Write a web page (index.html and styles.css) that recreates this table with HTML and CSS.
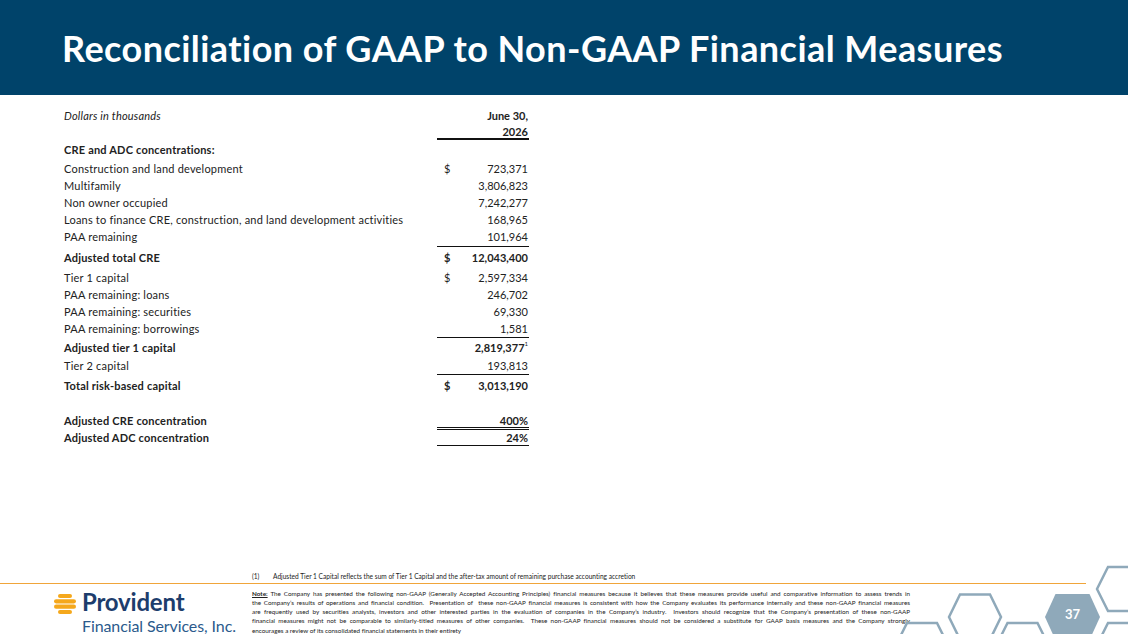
FILE: index.html
```html
<!DOCTYPE html>
<html lang="en">
<head>
<meta charset="utf-8">
<title>Reconciliation of GAAP to Non-GAAP Financial Measures</title>
<link rel="stylesheet" href="styles.css">
</head>
<body>
<div class="slide">
  <header class="hdr"><h1 class="title">Reconciliation of GAAP to Non-GAAP Financial Measures</h1></header>
  <main class="content">
    <div class="tbl">
      <div class="row h175"><span class="lbl it">Dollars in thousands</span><span class="amt"><span class="cur"></span><span class="val b">June 30,</span></span></div>
      <div class="row h15 bd2"><span class="lbl"></span><span class="amt"><span class="cur"></span><span class="val b">2026</span></span></div>
      <div class="row h20"><span class="lbl b">CRE and ADC concentrations:</span><span class="amt"></span></div>
      <div class="row"><span class="lbl">Construction and land development</span><span class="amt"><span class="cur">$</span><span class="val">723,371</span></span></div>
      <div class="row"><span class="lbl">Multifamily</span><span class="amt"><span class="cur"></span><span class="val">3,806,823</span></span></div>
      <div class="row"><span class="lbl">Non owner occupied</span><span class="amt"><span class="cur"></span><span class="val">7,242,277</span></span></div>
      <div class="row"><span class="lbl">Loans to finance CRE, construction, and land development activities</span><span class="amt"><span class="cur"></span><span class="val">168,965</span></span></div>
      <div class="row h19 bd1"><span class="lbl">PAA remaining</span><span class="amt"><span class="cur"></span><span class="val">101,964</span></span></div>
      <div class="row h22"><span class="lbl b">Adjusted total CRE</span><span class="amt"><span class="cur b">$</span><span class="val b">12,043,400</span></span></div>
      <div class="row"><span class="lbl">Tier 1 capital</span><span class="amt"><span class="cur">$</span><span class="val">2,597,334</span></span></div>
      <div class="row"><span class="lbl">PAA remaining: loans</span><span class="amt"><span class="cur"></span><span class="val">246,702</span></span></div>
      <div class="row"><span class="lbl">PAA remaining: securities</span><span class="amt"><span class="cur"></span><span class="val">69,330</span></span></div>
      <div class="row h18 bd1"><span class="lbl">PAA remaining: borrowings</span><span class="amt"><span class="cur"></span><span class="val">1,581</span></span></div>
      <div class="row h20"><span class="lbl b">Adjusted tier 1 capital</span><span class="amt"><span class="cur"></span><span class="val b">2,819,377<sup class="sup">1</sup></span></span></div>
      <div class="row bd1"><span class="lbl">Tier 2 capital</span><span class="amt"><span class="cur"></span><span class="val">193,813</span></span></div>
      <div class="row h22"><span class="lbl b">Total risk-based capital</span><span class="amt"><span class="cur b">$</span><span class="val b">3,013,190</span></span></div>
      <div class="row h13"></div>
      <div class="row h20 dbl low"><span class="lbl b">Adjusted CRE concentration</span><span class="amt"><span class="cur"></span><span class="val b">400%</span></span></div>
      <div class="row h16 bd1"><span class="lbl b">Adjusted ADC concentration</span><span class="amt"><span class="cur"></span><span class="val b">24%</span></span></div>
    </div>
  </main>
  <footer class="foot">
    <div class="fn"><span class="fn-num">(1)</span><span class="fn-txt">Adjusted Tier 1 Capital reflects the sum of Tier 1 Capital and the after-tax amount of remaining purchase accounting accretion</span></div>
    <div class="rule"></div>
    <div class="bottom">
      <div class="logo">
        <svg class="mark" viewBox="0 0 22 20" width="22" height="20" aria-hidden="true">
          <rect x="4" y="0" width="14" height="4" rx="2" fill="#f5a81c"/>
          <rect x="0" y="5.2" width="22" height="4.2" rx="2.1" fill="#f5a81c"/>
          <rect x="0" y="10.6" width="22" height="4.2" rx="2.1" fill="#f5a81c"/>
          <rect x="4" y="16" width="14" height="4" rx="2" fill="#f5a81c"/>
        </svg>
        <div class="ltxt">
          <div class="l1">Provident</div>
          <div class="l2">Financial Services, Inc.</div>
        </div>
      </div>
      <div class="note">
        <span class="ln"><b class="nt">Note:</b> The Company has presented the following non-GAAP (Generally Accepted Accounting Principles) financial measures because it believes that these measures provide useful and comparative information to assess trends in</span>
        <span class="ln">the Company’s results of operations and financial condition.&nbsp; Presentation of&nbsp; these non-GAAP financial measures is consistent with how the Company evaluates its performance internally and these non-GAAP financial measures</span>
        <span class="ln">are frequently used by securities analysts, investors and other interested parties in the evaluation of companies in the Company’s industry.&nbsp; Investors should recognize that the Company’s presentation of these non-GAAP</span>
        <span class="ln">financial measures might not be comparable to similarly-titled measures of other companies.&nbsp; These non-GAAP financial measures should not be considered a substitute for GAAP basis measures and the Company strongly</span>
        <span class="ln last">encourages a review of its consolidated financial statements in their entirety</span>
      </div>
    </div>
  </footer>
  <svg class="hexes" viewBox="0 0 248 94" width="248" height="94" aria-hidden="true">
    <g fill="none" stroke="#8fa9ba" stroke-width="2.5" stroke-linejoin="miter">
      <polygon points="69,77 80,54.5 110,54.5 121,77 110,99.5 80,99.5"/>
      <polygon points="217,49 228,27 258,27 269,49 258,71 228,71"/>
      <polygon points="217,105 228,83 258,83 269,105 258,127 228,127"/>
      <polygon points="116.5,105 127.5,83 157.5,83 168.5,105 157.5,127 127.5,127"/>
      <polygon points="16,105 27,83 57,83 68,105 57,127 27,127"/>
    </g>
    <polygon points="165,77 175.5,54 209.5,54 220,77 209.5,100 175.5,100" fill="#8fa9ba"/>
    <text x="192.5" y="79" class="pg" text-anchor="middle">37</text>
  </svg>
</div>
</body>
</html>
```

FILE: styles.css
```css
* { box-sizing: border-box; }
html, body { margin: 0; padding: 0; background: #fff; }
body {
  font-family: Lato, "Liberation Sans", Arial, sans-serif;
  color: #222;
  font-variant-ligatures: none;
}

.slide {
  position: relative;
  width: 1128px;
  height: 634px;
  overflow: hidden;
  background: #fff;
  display: flex;
  flex-direction: column;
}

.hdr {
  height: 95px;
  flex: none;
  background: #00436a;
  display: flex;
  align-items: center;
  padding: 2px 0 0 62px;
}
.title {
  margin: 0;
  color: #fff;
  font-size: 36px;
  font-weight: 700;
  letter-spacing: 0.45px;
  line-height: 1.2;
  white-space: nowrap;
}

.content { padding: 12px 0 0 64px; flex: none; }
.tbl { width: 465px; font-size: 11px; color: #222; letter-spacing: 0.2px; }
.row { display: flex; height: 17px; }
.h13 { height: 13px; }
.h15 { height: 15px; }
.h16 { height: 16px; }
.h175 { height: 17.5px; }
.h18 { height: 18px; }
.h19 { height: 19px; }
.h20 { height: 20px; }
.h22 { height: 22px; }

.lbl { flex: 1; display: flex; align-items: center; white-space: nowrap; }
.amt { width: 92px; display: flex; align-items: center; }
.cur { width: 20px; padding-left: 7px; }
.val { flex: 1; text-align: right; padding-right: 1px; white-space: nowrap; letter-spacing: 0; }
.b { font-weight: 700; }
.it { font-style: italic; }
.sup { font-size: 6px; vertical-align: top; position: relative; top: -1px; font-weight: 400; }

.bd1 .amt { border-bottom: 1px solid #111; }
.bd1 .lbl { border-bottom: 1px solid transparent; }
.bd2 .amt { border-bottom: 2px solid #111; }
.bd2 .lbl { border-bottom: 2px solid transparent; }
.dbl .amt { border-bottom: 3px double #111; }
.dbl .lbl { border-bottom: 3px solid transparent; }
.low .lbl, .low .amt { align-items: flex-end; line-height: 12px; }

.foot { margin-top: auto; height: 63px; flex: none; }
.fn {
  height: 10px;
  margin-left: 252px;
  display: flex;
  align-items: center;
  font-size: 6.6px;
  color: #222;
  white-space: nowrap;
}
.fn-num { width: 21px; }
.rule { margin: 1.5px 42px 0 0; border-top: 1.5px solid #f0a53a; }

.bottom { display: flex; padding-top: 5px; }
.logo {
  width: 252px;
  flex: none;
  padding: 4px 0 0 54px;
  display: flex;
  align-items: flex-start;
}
.mark { flex: none; margin-top: 1px; }
.ltxt { margin-left: 6px; margin-top: -6px; }
.l1 {
  font-size: 24px;
  font-weight: 700;
  color: #1d3d6c;
  line-height: 29px;
  letter-spacing: -0.2px;
}
.l2 {
  font-size: 16px;
  font-weight: 400;
  color: #2b5a8c;
  line-height: 19px;
  letter-spacing: -0.1px;
  white-space: nowrap;
}

.note { width: 658px; font-size: 6.3px; line-height: 9.3px; color: #222; }
.ln { display: block; text-align: justify; text-align-last: justify; }
.ln.last { text-align-last: left; }
.nt { text-decoration: underline; font-weight: 700; }

.hexes { position: absolute; left: 880px; top: 540px; }
.pg { font-family: Lato, "Liberation Sans", sans-serif; font-size: 13px; font-weight: 700; fill: #fff; }
```
